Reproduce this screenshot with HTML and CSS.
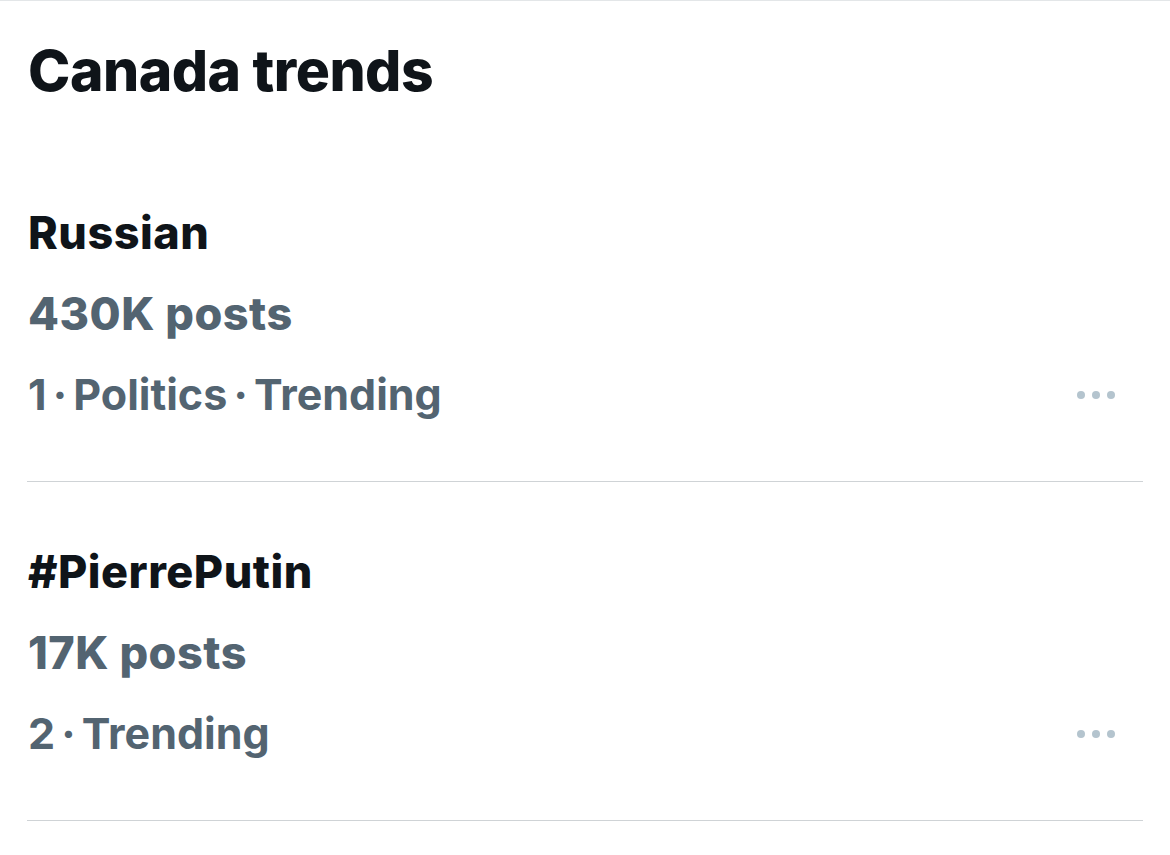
FILE: index.html
```html
<!DOCTYPE html>
<html lang="en">
<head>
<meta charset="utf-8">
<title>Canada trends</title>
<link rel="stylesheet" href="styles.css">
</head>
<body>
<section class="trends">
  <h2 class="trends-title">Canada trends</h2>
  <ul class="trend-list">
    <li class="trend">
      <div class="trend-body">
        <div class="trend-name">Russian</div>
        <div class="trend-count">430K posts</div>
        <div class="trend-meta">1 · Politics · Trending</div>
      </div>
      <button class="more" aria-label="More">
        <svg viewBox="0 0 40 10" width="40" height="10" aria-hidden="true">
          <circle cx="5" cy="5" r="4"/><circle cx="20" cy="5" r="4"/><circle cx="35" cy="5" r="4"/>
        </svg>
      </button>
    </li>
    <li class="trend">
      <div class="trend-body">
        <div class="trend-name">#PierrePutin</div>
        <div class="trend-count">17K posts</div>
        <div class="trend-meta">2 · Trending</div>
      </div>
      <button class="more" aria-label="More">
        <svg viewBox="0 0 40 10" width="40" height="10" aria-hidden="true">
          <circle cx="5" cy="5" r="4"/><circle cx="20" cy="5" r="4"/><circle cx="35" cy="5" r="4"/>
        </svg>
      </button>
    </li>
  </ul>
</section>
</body>
</html>
```
FILE: styles.css
```css
* { box-sizing: border-box; }

html, body {
  margin: 0;
  background: #ffffff;
}

body {
  font-family: Inter, "Noto Sans", "Liberation Sans", sans-serif;
  color: #0f1419;
}

.trends {
  border-top: 1px solid #e3e6e8;
  min-height: 855px;
}

.trends-title {
  margin: 0;
  padding: 30px 28px 0;
  font-size: 57px;
  font-weight: 800;
  line-height: 80px;
  letter-spacing: -0.5px;
}

.trend-list {
  list-style: none;
  margin: 0;
  padding: 0 27px;
}

.trend {
  display: flex;
  align-items: flex-end;
  justify-content: space-between;
  padding: 49px 0 46px 1px;
  border-bottom: 1px solid #cfd3d6;
}

.trend:first-child {
  padding-top: 81px;
}

.trend-name,
.trend-count,
.trend-meta {
  font-size: 45px;
  line-height: 81px;
  font-weight: 800;
  letter-spacing: 0.5px;
}

.trend-name { color: #0f1419; }

.trend-count,
.trend-meta { color: #536471; }

/* slightly lighter line, tight gaps around the middle dots */
.trend-meta {
  font-size: 43px;
  font-weight: 700;
  letter-spacing: 0;
  word-spacing: -4px;
}

.more {
  border: 0;
  background: none;
  padding: 0;
  margin: 0 27px 35px 0;
  display: flex;
  fill: #b4c4ce;
}
```
